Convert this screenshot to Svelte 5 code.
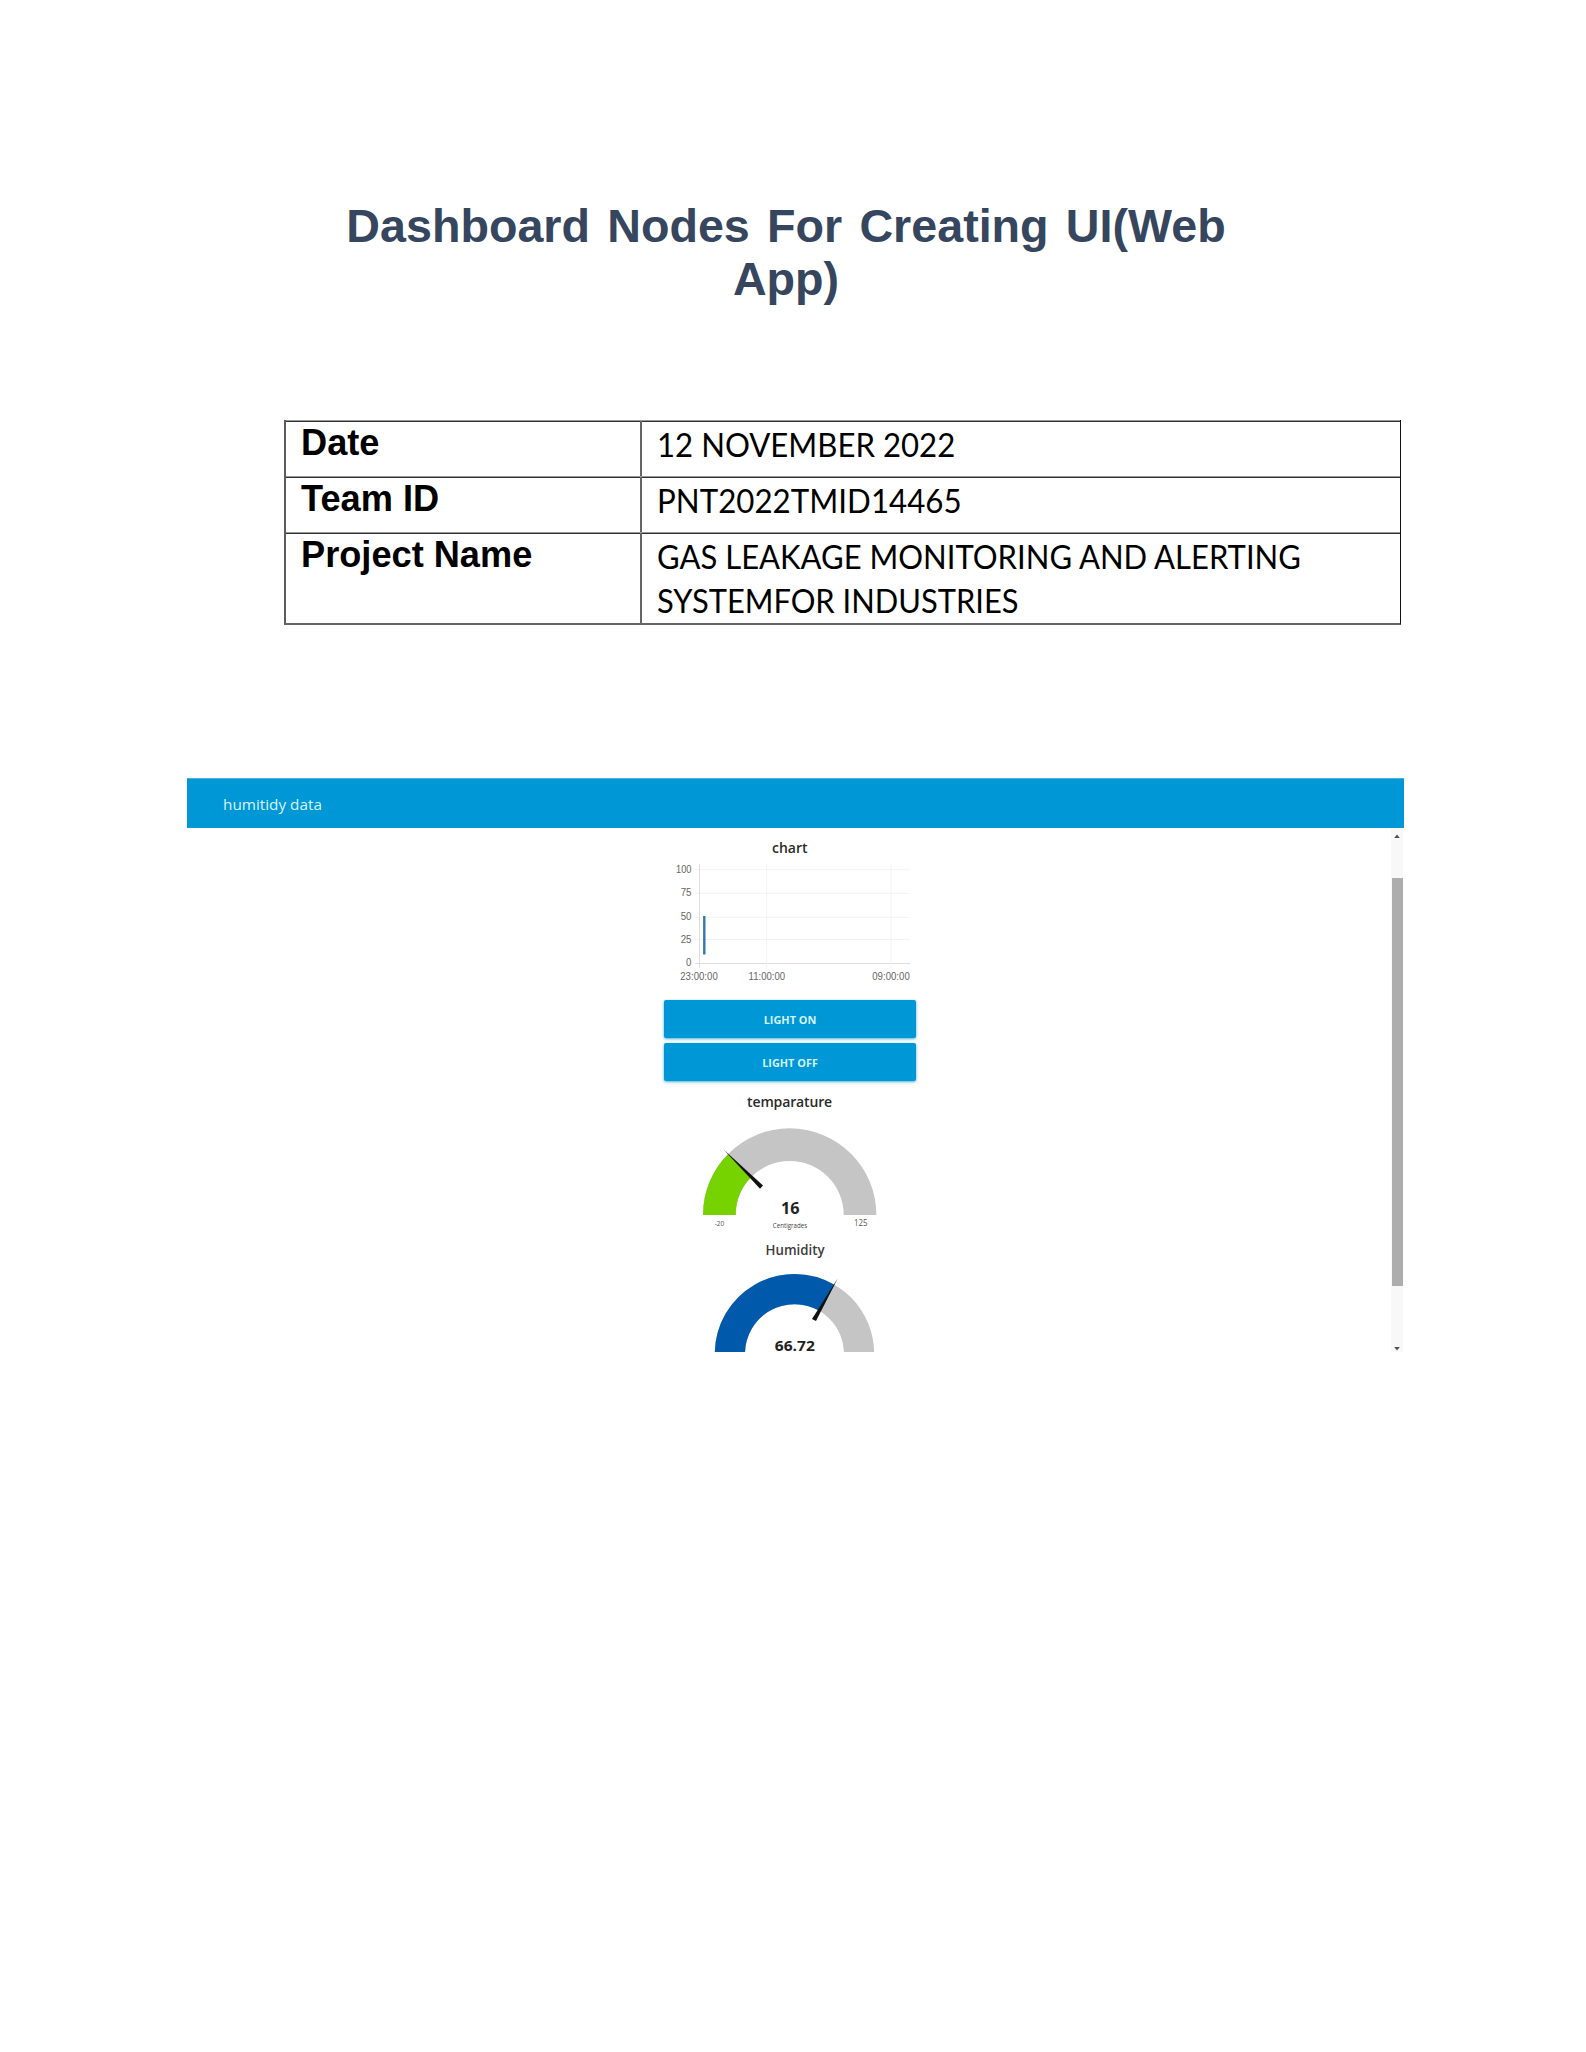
<script>
  const ticks = [
    { v: '100', y: 872.7, g: 869.7, w: 15.5 },
    { v: '75', y: 896, g: 893.3, w: 10.8 },
    { v: '50', y: 919.7, g: 917.3, w: 10.8 },
    { v: '25', y: 942.5, g: 939.5, w: 10.8 },
    { v: '0', y: 965.5, g: 963.5, w: 5.4 }
  ];
  const times = [
    { v: '23:00:00', x: 699, g: 699.5, w: 37.5 },
    { v: '11:00:00', x: 766.8, g: 766.7, w: 36.5 },
    { v: '09:00:00', x: 891, g: 891, w: 37.5 }
  ];

  // Half-ring segment between two fractions of the dial
  function arc(cx, cy, R, r, from, to) {
    const p = (rad, t) => {
      const a = Math.PI * (1 - t);
      return `${(cx + rad * Math.cos(a)).toFixed(2)} ${(cy - rad * Math.sin(a)).toFixed(2)}`;
    };
    return `M${p(R, from)}A${R} ${R} 0 0 1 ${p(R, to)}L${p(r, to)}A${r} ${r} 0 0 0 ${p(r, from)}Z`;
  }
</script>

<main class="page">
  <h1>Dashboard Nodes For Creating UI(Web<br />App)</h1>

  <div class="info">
    <div class="row">
      <div class="key">Date</div>
      <div class="val"><span class="v1">12 NOVEMBER 2022</span></div>
    </div>
    <div class="row">
      <div class="key">Team ID</div>
      <div class="val"><span class="v2">PNT2022TMID14465</span></div>
    </div>
    <div class="row tall">
      <div class="key">Project Name</div>
      <div class="val">
        <span class="v3">GAS LEAKAGE MONITORING AND ALERTING</span>
        <span class="v4">SYSTEMFOR INDUSTRIES</span>
      </div>
    </div>
  </div>

  <section class="dash">
    <header><span>humitidy data</span></header>
    <div class="body">
      <div class="column">
        <svg class="chart" viewBox="664 829 252 170.5" width="252" height="170.5">
          <text class="head" x="789.8" y="853" text-anchor="middle" textLength="35.5">chart</text>
          <g class="grid">
            {#each ticks as t}
              <line x1="695" x2="910" y1={t.g} y2={t.g} class:base={t.v === '0'} />
            {/each}
            {#each times as t, i}
              <line x1={t.g} x2={t.g} y1="864" y2="968" class:base={i === 0} />
            {/each}
          </g>
          <g class="tick">
            {#each ticks as t}
              <text x="691.5" y={t.y} text-anchor="end" textLength={t.w} lengthAdjust="spacingAndGlyphs">{t.v}</text>
            {/each}
            {#each times as t}
              <text x={t.x} y="980.3" text-anchor="middle" textLength={t.w} lengthAdjust="spacingAndGlyphs">{t.v}</text>
            {/each}
          </g>
          <line class="series" x1="704.3" x2="704.3" y1="916" y2="954.5" />
        </svg>

        <button>LIGHT ON</button>
        <button>LIGHT OFF</button>

        <svg class="gauges" viewBox="664 1081 252 280" width="252" height="280">
          <clipPath id="fold"><rect x="664" y="1081" width="252" height="271" /></clipPath>
          <text class="head" x="789.6" y="1106.8" text-anchor="middle" textLength="85">temparature</text>
          <path class="rest" d={arc(789.7, 1215, 86.7, 54, 0, 1)} />
          <path class="green" d={arc(789.7, 1215, 86.7, 54, 0, 36 / 145)} />
          <path class="needle" d="M723.3 1149.3L763 1185.4L760 1188.8Z" />
          <text class="num" x="790.2" y="1213.7" text-anchor="middle" textLength="18.5" lengthAdjust="spacingAndGlyphs">16</text>
          <text class="small" x="719.5" y="1225.8" text-anchor="middle" textLength="9.5" lengthAdjust="spacingAndGlyphs">-20</text>
          <text class="unit" x="790" y="1228.3" text-anchor="middle" textLength="34.5" lengthAdjust="spacingAndGlyphs">Centigrades</text>
          <text class="limit" x="860.7" y="1225.8" text-anchor="middle" textLength="13.5" lengthAdjust="spacingAndGlyphs">125</text>

          <text class="head light" x="795" y="1254.6" text-anchor="middle" textLength="59" lengthAdjust="spacingAndGlyphs">Humidity</text>
          <g clip-path="url(#fold)">
            <path class="rest" d={arc(794.5, 1353.7, 79.7, 49.5, 0, 1)} />
            <path class="blue" d={arc(794.5, 1353.7, 79.7, 49.5, 0, 0.6672)} />
          </g>
          <path class="needle" d="M837.7 1278.5L816 1321L812 1319Z" />
          <text class="num small-num" x="794.8" y="1350.5" text-anchor="middle" textLength="40" lengthAdjust="spacingAndGlyphs">66.72</text>
        </svg>
      </div>
      <div class="scroll">
        <svg width="12" height="50" viewBox="0 0 12 50"><path d="M3.2 10L6 6.6L8.8 10Z" /></svg>
        <div class="thumb"></div>
        <svg width="12" height="66" viewBox="0 0 12 66"><path d="M3.2 61L6 64.5L8.8 61Z" /></svg>
      </div>
    </div>
  </section>
</main>

<style>
  :global(body) { background: #fff; }
  .page {
    width: 1586px;
    height: 2052px;
    box-sizing: border-box;
    padding-top: 200px;
    overflow: hidden;
    background: #fff;
  }
  h1 {
    margin: 0 0 0 188px;
    width: 1196px;
    height: 220px;
    text-align: center;
    font: bold 46.65px/53px "Liberation Sans", Arial, sans-serif;
    word-spacing: 4.3px;
    color: #35465e;
  }
  .info {
    margin-left: 284px;
    width: 1117px;
    box-sizing: border-box;
    border-left: 2px solid #5c5c5c;
    border-right: 1px solid #111;
    border-bottom: 2px solid #666;
  }
  .row {
    display: flex;
    height: 56px;
    box-sizing: border-box;
    border-top: 1px solid #999;
    box-shadow: inset 0 1px #333;
  }
  .tall { height: 91px; }
  .key {
    width: 356px;
    box-sizing: border-box;
    padding: 1px 0 0 15px;
    border-right: 2px solid #666;
    font: bold 36.2px/42px "Liberation Sans", Arial, sans-serif;
    color: #000;
  }
  .val {
    padding: 2px 0 0 15px;
    font: 32px/44px Lato, sans-serif;
    color: #000;
  }
  .val span {
    display: block;
    white-space: nowrap;
    transform-origin: 0 0;
  }
  .v1 { transform: scaleX(0.974); }
  .v2 { transform: scaleX(0.978); }
  .v3 { transform: scaleX(0.969); }
  .v4 { transform: scaleX(0.965); }
  .dash {
    margin: 153px 0 0 187px;
    width: 1217px;
    font-family: "Open Sans", "Noto Sans", sans-serif;
  }
  header {
    height: 50px;
    padding-left: 36px;
    background: #0097d6;
    box-shadow: inset 0 1px #3fb4df;
    color: #d9f5fa;
    font-size: 15.3px;
    font-weight: 500;
    line-height: 53px;
  }
  .body {
    display: flex;
    justify-content: space-between;
    height: 524px;
  }
  .column {
    display: flex;
    flex-direction: column;
    width: 252px;
    margin-left: 477px;
  }
  svg { display: block; flex: none; }
  button {
    height: 38px;
    margin: 0 0 5px;
    padding: 0;
    flex: none;
    border: 0;
    border-radius: 2px;
    background: #0097d6;
    box-shadow: 0 1px 3px #4ab0d6;
    color: #d4f4fb;
    font: 700 10.9px/39px "Open Sans", "Noto Sans", sans-serif;
  }
  .chart { margin-top: 1px; }
  .gauges { margin-top: -5px; }
  .head { font-size: 14px; font-weight: 600; fill: #2b2b2b; }
  .light { fill: #3c3c3c; }
  .grid line { stroke: #f3f3f3; stroke-width: 1; }
  .grid .base { stroke: #dedede; }
  .tick { font: 10.5px "Liberation Sans", Arial, sans-serif; fill: #666; }
  .series { stroke: #2f78ae; stroke-width: 2.4; }
  .rest { fill: #c5c5c5; }
  .green { fill: #76d300; }
  .blue { fill: #0059ab; }
  .needle { fill: #111; }
  .num { font-size: 16px; font-weight: 700; fill: #222; }
  .small-num { font-size: 15px; }
  .small { font-size: 6.5px; fill: #555; }
  .unit { font-size: 6.5px; fill: #444; }
  .limit { font-size: 8.5px; fill: #555; }
  .scroll {
    display: flex;
    flex-direction: column;
    justify-content: space-between;
    width: 12px;
    margin-right: 1px;
    background: #f8f8f8;
  }
  .scroll path { fill: #505050; }
  .thumb { height: 408px; margin: 0 0 0 1px; background: #adadad; }
</style>
